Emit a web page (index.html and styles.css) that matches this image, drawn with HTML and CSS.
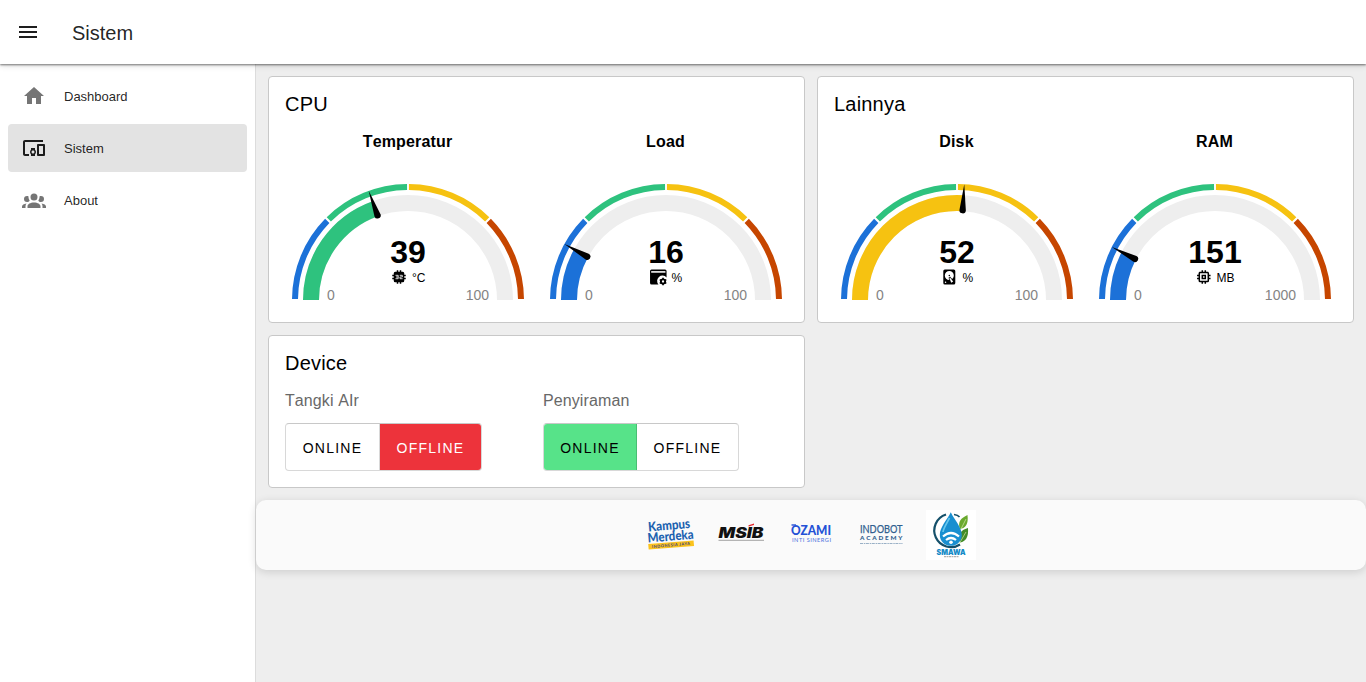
FILE: index.html
```html
<!DOCTYPE html>
<html lang="id">
<head>
<meta charset="utf-8">
<title>Sistem</title>
<link rel="stylesheet" href="styles.css">
</head>
<body>
<svg class="defs" width="0" height="0" aria-hidden="true">
  <defs>
    <g id="dial" fill="none">
      <path class="seg-blue" pathLength="180" d="M-113 0A113 113 0 0 1 113 0"/>
      <path class="seg-green" pathLength="180" d="M-113 0A113 113 0 0 1 113 0"/>
      <path class="seg-yellow" pathLength="180" d="M-113 0A113 113 0 0 1 113 0"/>
      <path class="seg-red" pathLength="180" d="M-113 0A113 113 0 0 1 113 0"/>
      <path class="track" d="M-97 0A97 97 0 0 1 97 0"/>
    </g>
    <path id="needle" d="M-116 0L-90 -3.2A3.2 3.2 0 1 1 -90 3.2Z"/>
  </defs>
</svg>
<header class="appbar">
  <svg class="menu" viewBox="0 0 24 24"><path d="M3,6H21V8H3V6M3,11H21V13H3V11M3,16H21V18H3V16Z"/></svg>
  <h1 class="appbar-title">Sistem</h1>
</header>
<div class="shell">
  <nav class="sidebar">
    <a class="item"><svg viewBox="0 0 24 24"><path d="M10,20V14H14V20H19V12H22L12,3L2,12H5V20H10Z"/></svg><span>Dashboard</span></a>
    <a class="item active"><svg viewBox="0 0 24 24"><path d="M3 6h18V4H3c-1.1 0-2 .9-2 2v12c0 1.1.9 2 2 2h4v-2H3V6zm10 6H9v1.78c-.61.55-1 1.33-1 2.22s.39 1.67 1 2.22V20h4v-1.78c.61-.55 1-1.34 1-2.22s-.39-1.67-1-2.22V12zm-2 5.5c-.83 0-1.5-.67-1.5-1.5s.67-1.5 1.5-1.5 1.5.67 1.5 1.5-.67 1.5-1.5 1.5zM22 8h-6c-.5 0-1 .5-1 1v10c0 .5.5 1 1 1h6c.5 0 1-.5 1-1V9c0-.5-.5-1-1-1zm-1 10h-4v-8h4v8z"/></svg><span>Sistem</span></a>
    <a class="item"><svg viewBox="0 0 24 24"><path d="M12,5.5A3.5,3.5 0 0,1 15.5,9A3.5,3.5 0 0,1 12,12.5A3.5,3.5 0 0,1 8.5,9A3.5,3.5 0 0,1 12,5.5M5,8C5.56,8 6.08,8.15 6.53,8.42C6.38,9.85 6.8,11.27 7.66,12.38C7.16,13.34 6.16,14 5,14A3,3 0 0,1 2,11A3,3 0 0,1 5,8M19,8A3,3 0 0,1 22,11A3,3 0 0,1 19,14C17.84,14 16.84,13.34 16.34,12.38C17.2,11.27 17.62,9.85 17.47,8.42C17.92,8.15 18.44,8 19,8M5.5,18.25C5.5,16.18 8.41,14.5 12,14.5C15.59,14.5 18.5,16.18 18.5,18.25V20H5.5V18.25M0,20V18.5C0,17.11 1.89,15.94 4.45,15.6C3.86,16.28 3.5,17.22 3.5,18.25V20H0M24,20H20.5V18.25C20.5,17.22 20.14,16.28 19.55,15.6C22.11,15.94 24,17.11 24,18.5V20Z"/></svg><span>About</span></a>
  </nav>
  <main class="main">
    <div class="cards">
      <section class="card gauges-card">
        <h2 class="card-title">CPU</h2>
        <div class="cols">
          <div class="gauge">
            <h3>Temperatur</h3>
            <svg viewBox="-120 -120 240 124">
              <use href="#dial"/>
              <path class="value green" pathLength="100" stroke-dasharray="39 200" d="M-97 0A97 97 0 0 1 97 0"/>
              <use href="#needle" transform="rotate(70.2)"/>
              <text class="num" x="0" y="-37">39</text>
              <g transform="translate(-18 -32) scale(.75)">
                <path d="M9,3V5H7A2,2 0 0,0 5,7V9H3V11H5V13H3V15H5V17A2,2 0 0,0 7,19H9V21H11V19H13V21H15V19H17A2,2 0 0,0 19,17V15H21V13H19V11H21V9H19V7A2,2 0 0,0 17,5H15V3H13V5H11V3H9Z"/>
                <path class="bits" d="M7.3 9.75h3.6v4.5H7.3M8 12h2.9M13 9.75h3.4v2.25H13.3v2.25H16.8"/>
              </g>
              <text class="unit" x="4" y="-18">°C</text>
              <text class="lim" x="-81" y="0">0</text><text class="lim end" x="81" y="0">100</text>
            </svg>
          </div>
          <div class="gauge">
            <h3>Load</h3>
            <svg viewBox="-120 -120 240 124">
              <use href="#dial"/>
              <path class="value blue" pathLength="100" stroke-dasharray="16 200" d="M-97 0A97 97 0 0 1 97 0"/>
              <use href="#needle" transform="rotate(28.8)"/>
              <text class="num" x="0" y="-37">16</text>
              <g transform="translate(-16.7 -32) scale(.75)">
                <path d="M3 2H21A2 2 0 0 1 23 4V12.5A7 7 0 0 0 12.2 22H3A2 2 0 0 1 1 20V4A2 2 0 0 1 3 2Z"/>
                <path class="pane" d="M2.5 4H21.5V6.4H2.5Z"/>
                <circle cx="18.3" cy="18" r="6" fill="#fff"/>
                <circle class="cog-ring" cx="18.3" cy="18" r="2.8"/>
                <path class="cog-teeth" d="M18.3 12.9V15M18.3 21V23.1M13.9 15.5L15.8 16.5M20.8 19.5L22.7 20.5M13.9 20.5L15.8 19.5M20.8 16.5L22.7 15.5"/>
              </g>
              <text class="unit" x="5.6" y="-18">%</text>
              <text class="lim" x="-81" y="0">0</text><text class="lim end" x="81" y="0">100</text>
            </svg>
          </div>
        </div>
      </section>
      <section class="card gauges-card">
        <h2 class="card-title">Lainnya</h2>
        <div class="cols">
          <div class="gauge">
            <h3>Disk</h3>
            <svg viewBox="-120 -120 240 124">
              <use href="#dial"/>
              <path class="value yellow" pathLength="100" stroke-dasharray="52 200" d="M-97 0A97 97 0 0 1 97 0"/>
              <use href="#needle" transform="rotate(93.6)"/>
              <text class="num" x="0" y="-37">52</text>
              <path transform="translate(-16.7 -32) scale(.75)" d="M6,2H18A2,2 0 0,1 20,4V20A2,2 0 0,1 18,22H6A2,2 0 0,1 4,20V4A2,2 0 0,1 6,2M12,4A6,6 0 0,0 6,10C6,13.31 8.69,16 12.1,16L11.22,13.77C10.95,13.29 11.11,12.68 11.59,12.4L12.45,11.9C12.93,11.63 13.54,11.79 13.82,12.27L15.74,14.69C17.12,13.59 18,11.9 18,10A6,6 0 0,0 12,4M12,9A1,1 0 0,1 13,10A1,1 0 0,1 12,11A1,1 0 0,1 11,10A1,1 0 0,1 12,9M7,18A1,1 0 0,0 6,19A1,1 0 0,0 7,20A1,1 0 0,0 8,19A1,1 0 0,0 7,18M12.09,13.27L14.58,19.58L17.17,18.08L12.95,12.77L12.09,13.27Z"/>
              <text class="unit" x="5.6" y="-18">%</text>
              <text class="lim" x="-81" y="0">0</text><text class="lim end" x="81" y="0">100</text>
            </svg>
          </div>
          <div class="gauge">
            <h3>RAM</h3>
            <svg viewBox="-120 -120 240 124">
              <use href="#dial"/>
              <path class="value blue" pathLength="100" stroke-dasharray="15.1 200" d="M-97 0A97 97 0 0 1 97 0"/>
              <use href="#needle" transform="rotate(27.2)"/>
              <text class="num" x="0" y="-37">151</text>
              <path transform="translate(-20.2 -32) scale(.75)" d="M17,17H7V7H17M21,11V9H19V7C19,5.89 18.1,5 17,5H15V3H13V5H11V3H9V5H7C5.89,5 5,5.89 5,7V9H3V11H5V13H3V15H5V17A2,2 0 0,0 7,19H9V21H11V19H13V21H15V19H17A2,2 0 0,0 19,17V15H21V13H19V11M13,13H11V11H13M15,9H9V15H15V9Z"/>
              <text class="unit" x="1.5" y="-18">MB</text>
              <text class="lim" x="-81" y="0">0</text><text class="lim end" x="81" y="0">1000</text>
            </svg>
          </div>
        </div>
      </section>
      <section class="card device-card">
        <h2 class="card-title">Device</h2>
        <div class="cols">
          <div>
            <p class="label">Tangki AIr</p>
            <div class="toggle"><span class="btn on-side">ONLINE</span><span class="btn off-side is-off">OFFLINE</span></div>
          </div>
          <div>
            <p class="label">Penyiraman</p>
            <div class="toggle narrow"><span class="btn on-side is-on">ONLINE</span><span class="btn off-side">OFFLINE</span></div>
          </div>
        </div>
      </section>
    </div>
    <footer class="footer">
      <svg class="logo" viewBox="0 0 50 50">
        <g transform="rotate(-5 25 25)" fill="#1d62b0" class="kampus">
          <text x="3" y="19.6" textLength="42" lengthAdjust="spacingAndGlyphs">Kampus</text>
          <text x="1.5" y="30.6" textLength="46" lengthAdjust="spacingAndGlyphs">Merdeka</text>
          <path d="M1.5 32L47 32.5V38L1.5 37.5Z" fill="#fbc21c"/>
          <text class="jaya" x="5" y="36.4" textLength="38">INDONESIA JAYA</text>
        </g>
      </svg>
      <svg class="logo" viewBox="0 0 50 50">
        <text class="msib" x="2.5" y="28" textLength="45" lengthAdjust="spacingAndGlyphs">MSIB</text>
        <path d="M32.5 15.2L38 13.4V15L32.5 16.6Z" fill="#e5262b"/>
        <path d="M2.5 30.3H48" stroke="#999" stroke-width=".9"/>
      </svg>
      <svg class="logo" viewBox="0 0 50 50">
        <text class="ozami" x="5" y="24.6" textLength="40" lengthAdjust="spacingAndGlyphs">OZAMI</text>
        <path d="M5.5 15H10" stroke="#2451d6" stroke-width="1.4"/>
        <text class="inti" x="6" y="31.8" textLength="39">INTI SINERGI</text>
      </svg>
      <svg class="logo" viewBox="0 0 50 50">
        <text class="indobot" x="4" y="23.1" textLength="42.5" lengthAdjust="spacingAndGlyphs">INDOBOT</text>
        <text class="academy" x="4" y="30.3" textLength="42.5">ACADEMY</text>
        <path d="M4 33.5H46.5" stroke="#809db9" stroke-width=".8" stroke-dasharray="3 .8 1.5 .6"/>
      </svg>
      <svg class="logo" viewBox="0 0 50 50">
        <path fill="#fff" d="M0 0H50V50H0Z"/>
        <path d="M20 4.5A16.7 16.7 0 1 0 34 34.5" fill="none" stroke="#15506a" stroke-width="2.2"/>
        <path d="M28 4.5Q32 5 33.5 7" fill="none" stroke="#15506a" stroke-width="1.6"/>
        <path d="M41.5 5C35 8 31.5 11.5 33.8 19Q43 18 41.5 5Z" fill="#69a92d"/>
        <path d="M42 18C34 20 32 25 34 32.5Q43 31 42 18Z" fill="#438c29"/>
        <path d="M40 9L34 21M40 22L33 34" stroke="#d1e8a8" stroke-width=".7"/>
        <path d="M24.8 2.2C21 10 13.8 17 13.8 25A11 10.8 0 0 0 35.8 25C35.8 17 28.5 10 24.8 2.2Z" fill="#198fd0"/>
        <path d="M23.5 8C21 13 17.5 18 17 22" fill="none" stroke="#67c7ed" stroke-width="1.7"/>
        <path d="M17 26.5Q25 19.5 33 26.5M20 30Q25 26 30 30" fill="none" stroke="#fff" stroke-width="2.2"/>
        <circle cx="25" cy="32.3" r="1.8" fill="#fff"/>
        <text class="smawa" x="10.5" y="44.6" textLength="29" lengthAdjust="spacingAndGlyphs">SMAWA</text>
        <path d="M18 46.7H33" stroke="#777" stroke-width=".7" stroke-dasharray="2 .5"/>
      </svg>
    </footer>
  </main>
</div>
</body>
</html>
```

FILE: styles.css
```css
* { box-sizing: border-box; }
body { margin: 0; height: 682px; overflow: hidden; display: flex; flex-direction: column; background: #eee; font-family: "Liberation Sans", Arial, sans-serif; color: #000; }
h1, h2, h3, p { margin: 0; font-weight: 400; }
.defs { position: absolute; }
.appbar { position: relative; flex: 0 0 64px; display: flex; align-items: center; padding-left: 16px; background: #fff; box-shadow: 0 1px 2px rgba(0,0,0,.5), 0 2px 6px rgba(0,0,0,.12); z-index: 2; }
.menu { width: 24px; height: 24px; fill: #1e1e1e; }
.appbar-title { margin-left: 32px; padding-top: 2px; font-size: 20px; line-height: 24px; color: rgba(0,0,0,.87); }
.shell { flex: 1; display: flex; min-height: 0; }
.sidebar { width: 256px; flex: none; padding: 8px; background: #fff; border-right: 1px solid #dcdcdc; }
.item { display: flex; align-items: center; height: 48px; margin-bottom: 4px; padding-left: 14px; border-radius: 4px; font-size: 13px; color: rgba(0,0,0,.87); }
.item svg { width: 24px; height: 24px; margin-right: 18px; fill: #757575; }
.active { background: #e3e3e3; }
.item.active svg { fill: #1c1c1c; }
.main { flex: 1; min-width: 0; }
.cards { display: grid; grid-template-columns: 537px 537px; gap: 12px; padding: 12px; }
.card { background: #fff; border: 1px solid #c8c8c8; border-radius: 4px; padding: 11px 16px 0; }
.gauges-card { height: 247px; }
.device-card { height: 153px; }
.card-title { font-size: 20px; line-height: 32px; letter-spacing: .2px; }
.cols { display: grid; grid-template-columns: 246px 246px; gap: 12px; }
.gauge { display: flex; flex-direction: column; align-items: center; }
.gauge h3 { margin-top: 10px; padding-right: 1px; font-size: 16px; line-height: 24px; font-weight: 700; letter-spacing: .15px; font-kerning: none; }
.gauge svg { width: 240px; height: 124px; margin-top: 26px; }
.seg-blue, .seg-green, .seg-yellow, .seg-red { stroke-width: 6; }
.seg-blue { stroke: #1c71d8; stroke-dasharray: 0 .5 43.9 200; }
.seg-green { stroke: #2ec27e; stroke-dasharray: 0 45.5 44 200; }
.seg-yellow { stroke: #f6c211; stroke-dasharray: 0 90.5 44 200; }
.seg-red { stroke: #c64600; stroke-dasharray: 0 135.6 43.9 200; }
.track, .value { fill: none; stroke-width: 16; }
.track { stroke: #eee; }
.green { stroke: #2ec27e; }
.blue { stroke: #1c71d8; }
.yellow { stroke: #f6c211; }
.num { font-size: 32px; font-weight: 700; text-anchor: middle; }
.unit { font-size: 12px; }
.lim { font-size: 14px; fill: #848484; }
.end { text-anchor: end; }
.bits { fill: none; stroke: #fff; stroke-width: 1.1; }
.pane { fill: #ddd; }
.cog-ring { fill: none; stroke: #000; stroke-width: 2.5; }
.cog-teeth { stroke: #000; stroke-width: 2.2; }
.label { margin-top: 10px; font-size: 16px; line-height: 24px; color: #686868; letter-spacing: .1px; font-kerning: none; }
.toggle { display: flex; width: 197px; height: 48px; margin-top: 10px; border: 1px solid #d8d8d8; border-top-color: #c8c8c8; border-radius: 4px; overflow: hidden; }
.btn { display: flex; align-items: center; justify-content: center; padding-top: 2px; font-size: 14px; letter-spacing: 1.25px; }
.on-side { width: 94px; border-right: 1px solid #d8d8d8; }
.off-side { flex: 1; }
.narrow { width: 196px; }
.narrow .on-side { width: 93px; }
.is-off { background: #ed333b; color: #fff; }
.is-on { background: #57e389; border-right-color: #49be73; }
.footer { height: 70px; display: flex; justify-content: center; align-items: center; gap: 20px; background: #fafafa; border-radius: 10px; box-shadow: 0 2px 8px rgba(0,0,0,.14); }
.logo { width: 50px; height: 50px; overflow: visible; }
.logo text { line-height: 1; }
.kampus { font: 900 13px "Lato", sans-serif; }
.jaya { font: 700 4px "Lato", sans-serif; fill: #34418b; }
.msib { font: italic 900 14.5px "Inter", sans-serif; fill: #111; }
.ozami { font: 900 13px "Lato", sans-serif; fill: #2451d6; }
.inti { font: 500 5.6px "Lato", sans-serif; fill: #5578df; }
.indobot { font: 400 10.5px "Lato", sans-serif; fill: #315f8f; stroke: #315f8f; stroke-width: .25px; }
.academy { font: 900 6.3px "Lato", sans-serif; fill: #315f8f; }
.smawa { font: 900 7.5px "Inter", sans-serif; fill: #168bc7; }
```
